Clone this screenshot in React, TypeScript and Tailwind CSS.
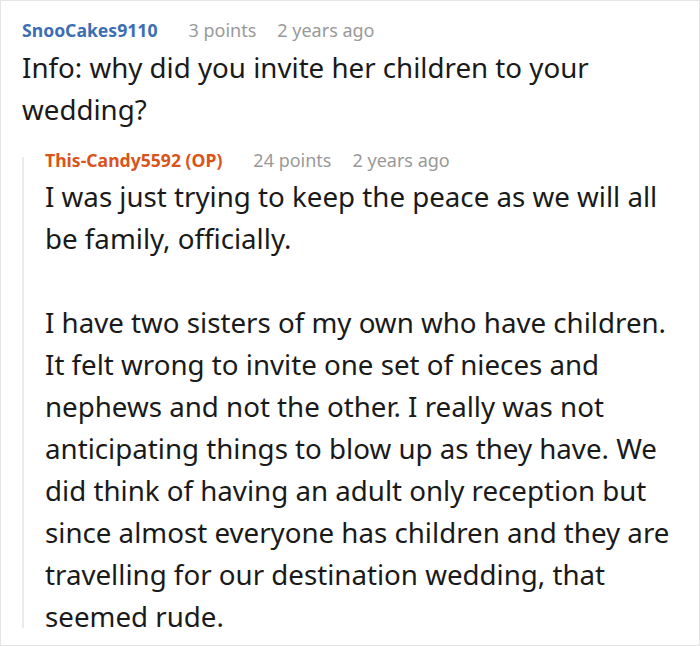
export default function App() {
  return (
    <div className="w-[700px] h-[646px] bg-white border border-[#e5e5e5] font-['Noto_Sans',sans-serif] text-[#1a1a1a] overflow-hidden">
      {/* Top comment */}
      <div className="pl-[21px] pt-[17px] pr-[2px]">
        <div className="flex items-baseline text-[18px] leading-[24px]">
          <span className="font-bold text-[#3c6eb4] text-[17.6px]">SnooCakes9110</span>
          <span className="text-[#999999] ml-[31px]">3 points</span>
          <span className="text-[#999999] ml-[21px]">2 years ago</span>
        </div>
        <p className="text-[27.7px] leading-[42px] mt-[4px]">
          Info: why did you invite her children to your wedding?
        </p>
      </div>

      {/* Reply */}
      <div className="flex ml-[21px] mt-[18px]">
        <div className="w-[2px] bg-[#ebebeb] my-[9px] shrink-0" />
        <div className="pl-[21px] pr-[14px]">
          <div className="flex items-baseline text-[18px] leading-[24px]">
            <span className="font-bold text-[#d9541b] text-[17.6px]">This-Candy5592 (OP)</span>
            <span className="text-[#999999] ml-[31px]">24 points</span>
            <span className="text-[#999999] ml-[21px]">2 years ago</span>
          </div>
          <div className="text-[27.7px] leading-[42px] mt-[3px]">
            <p>I was just trying to keep the peace as we will all be family, officially.</p>
            <p className="mt-[42px]">
              I have two sisters of my own who have children. It felt wrong to invite one set of nieces and
              nephews and not the other. I really was not anticipating things to blow up as they have. We
              did think of having an adult only reception but since almost everyone has children and they are
              travelling for our destination wedding, that seemed rude.
            </p>
          </div>
        </div>
      </div>
    </div>
  );
}
